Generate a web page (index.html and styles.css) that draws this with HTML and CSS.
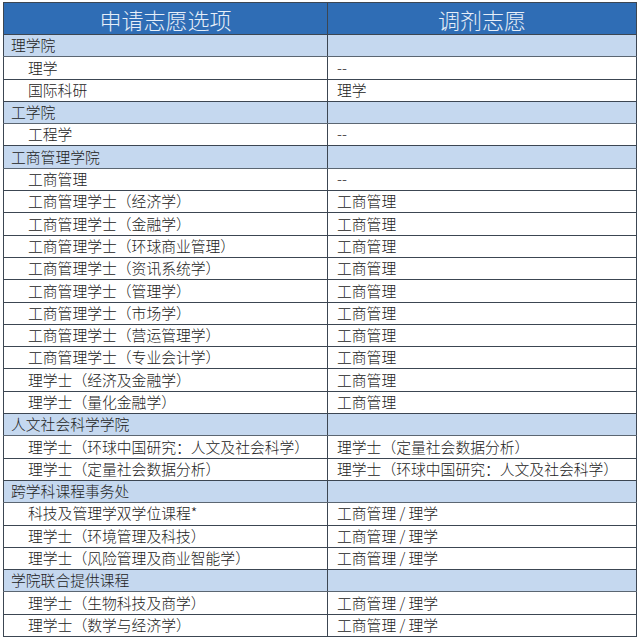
FILE: index.html
```html
<!DOCTYPE html>
<html lang="zh-CN">
<head>
<meta charset="utf-8">
<link rel="stylesheet" href="styles.css">
</head>
<body>
<table class="tbl">
  <colgroup><col class="c1"><col class="c2"></colgroup>
  <thead>
    <tr class="head"><th>申请志愿选项</th><th>调剂志愿</th></tr>
  </thead>
  <tbody>
    <tr class="sec"><td>理学院</td><td></td></tr>
    <tr><td class="ind">理学</td><td>--</td></tr>
    <tr><td class="ind">国际科研</td><td>理学</td></tr>
    <tr class="sec"><td>工学院</td><td></td></tr>
    <tr><td class="ind">工程学</td><td>--</td></tr>
    <tr class="sec"><td>工商管理学院</td><td></td></tr>
    <tr><td class="ind">工商管理</td><td>--</td></tr>
    <tr><td class="ind">工商管理学士（经济学）</td><td>工商管理</td></tr>
    <tr><td class="ind">工商管理学士（金融学）</td><td>工商管理</td></tr>
    <tr><td class="ind">工商管理学士（环球商业管理）</td><td>工商管理</td></tr>
    <tr><td class="ind">工商管理学士（资讯系统学）</td><td>工商管理</td></tr>
    <tr><td class="ind">工商管理学士（管理学）</td><td>工商管理</td></tr>
    <tr><td class="ind">工商管理学士（市场学）</td><td>工商管理</td></tr>
    <tr><td class="ind">工商管理学士（营运管理学）</td><td>工商管理</td></tr>
    <tr><td class="ind">工商管理学士（专业会计学）</td><td>工商管理</td></tr>
    <tr><td class="ind">理学士（经济及金融学）</td><td>工商管理</td></tr>
    <tr><td class="ind">理学士（量化金融学）</td><td>工商管理</td></tr>
    <tr class="sec"><td>人文社会科学学院</td><td></td></tr>
    <tr><td class="ind">理学士（环球中国研究：人文及社会科学）</td><td>理学士（定量社会数据分析）</td></tr>
    <tr><td class="ind">理学士（定量社会数据分析）</td><td>理学士（环球中国研究：人文及社会科学）</td></tr>
    <tr class="sec"><td>跨学科课程事务处</td><td></td></tr>
    <tr><td class="ind">科技及管理学双学位课程*</td><td>工商管理 / 理学</td></tr>
    <tr><td class="ind">理学士（环境管理及科技）</td><td>工商管理 / 理学</td></tr>
    <tr><td class="ind">理学士（风险管理及商业智能学）</td><td>工商管理 / 理学</td></tr>
    <tr class="sec"><td>学院联合提供课程</td><td></td></tr>
    <tr><td class="ind">理学士（生物科技及商学）</td><td>工商管理 / 理学</td></tr>
    <tr><td class="ind">理学士（数学与经济学）</td><td>工商管理 / 理学</td></tr>
  </tbody>
</table>
</body>
</html>
```

FILE: styles.css
```css
html, body {
  margin: 0;
  padding: 0;
  background: #ffffff;
}
body {
  padding: 2px 0 0 3px;
  font-family: "Noto Sans CJK SC", "Noto Sans", sans-serif;
  color: #222222;
}
.tbl {
  border-collapse: collapse;
  table-layout: fixed;
  width: 633px;
}
.c1 { width: 324px; }
.c2 { width: 309px; }
.tbl th, .tbl td {
  border: 1px solid #3c4652;
  padding: 0;
  line-height: 1;
  vertical-align: middle;
  white-space: nowrap;
  overflow: hidden;
}
.head th {
  height: 30px;
  background: #2f6db5;
  color: #e6eef8;
  font-size: 22px;
  font-weight: 300;
  text-align: center;
  padding-top: 1px;
}
.tbl td {
  height: 21.3px;
  font-size: 14.8px;
  font-weight: 300;
  padding-left: 7px;
}
.tbl td.ind {
  padding-left: 24px;
}
.tbl td + td {
  padding-left: 9px;
}
.sec td {
  background: #c5d8ef;
  border-bottom-color: #5b6672;
}
```
